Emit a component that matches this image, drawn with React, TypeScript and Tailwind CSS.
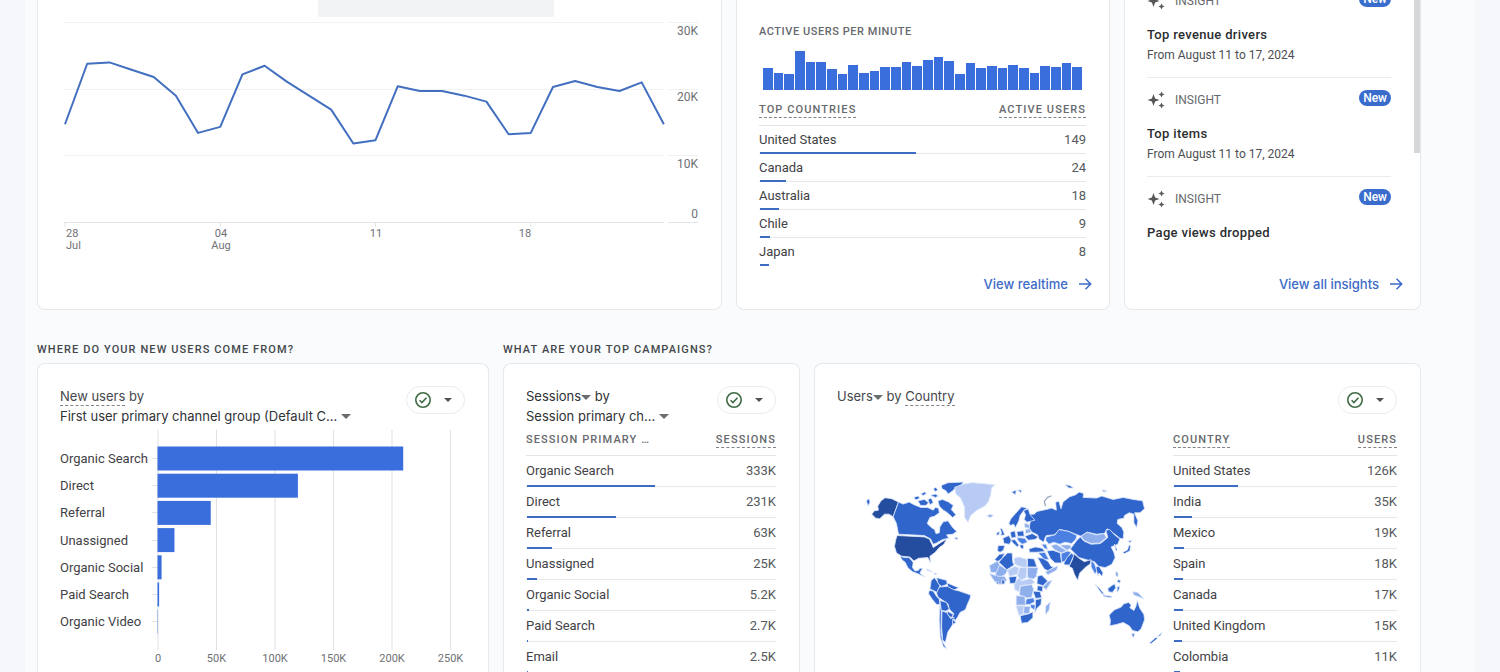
import type { ReactNode } from "react";

/* ─── Data ─── */
const dailyUsers = [
  14.7, 23.8, 24, 22.9, 21.8, 19, 13.4, 14.3, 22.2, 23.5, 21.1, 19, 16.9, 11.8,
  12.3, 20.4, 19.7, 19.7, 19, 18.1, 13.2, 13.4, 20.3, 21.2, 20.3, 19.7, 21, 14.7,
];

const perMinute = [
  22, 17, 16, 39, 28, 28, 21, 16, 25, 17, 19, 23, 23, 28, 24,
  30, 33, 29, 16, 27, 22, 24, 22, 25, 22, 17, 24, 23, 27, 23,
];

type Row = { name: string; value: string; share: number };

const realtimeRows: Row[] = [
  { name: "United States", value: "149", share: 47.8 },
  { name: "Canada", value: "24", share: 7.8 },
  { name: "Australia", value: "18", share: 5.8 },
  { name: "Chile", value: "9", share: 3 },
  { name: "Japan", value: "8", share: 2.6 },
];

const sessionRows: Row[] = [
  { name: "Organic Search", value: "333K", share: 51.2 },
  { name: "Direct", value: "231K", share: 35.5 },
  { name: "Referral", value: "63K", share: 9.8 },
  { name: "Unassigned", value: "25K", share: 3.9 },
  { name: "Organic Social", value: "5.2K", share: 0.8 },
  { name: "Paid Search", value: "2.7K", share: 0.4 },
  { name: "Email", value: "2.5K", share: 0.4 },
];

const countryRows: Row[] = [
  { name: "United States", value: "126K", share: 28.6 },
  { name: "India", value: "35K", share: 8 },
  { name: "Mexico", value: "19K", share: 4.3 },
  { name: "Spain", value: "18K", share: 4.1 },
  { name: "Canada", value: "17K", share: 3.9 },
  { name: "United Kingdom", value: "15K", share: 3.4 },
  { name: "Colombia", value: "11K", share: 2.5 },
];

const channels = [
  { name: "Organic Search", users: 210 },
  { name: "Direct", users: 120 },
  { name: "Referral", users: 45.5 },
  { name: "Unassigned", users: 14.5 },
  { name: "Organic Social", users: 3.5 },
  { name: "Paid Search", users: 1.4 },
  { name: "Organic Video", users: 0.3 },
];

const insights = [
  { title: "Top revenue drivers", range: "From August 11 to 17, 2024" },
  { title: "Top items", range: "From August 11 to 17, 2024" },
  { title: "Page views dropped", range: "" },
];

/* ─── Icons ─── */
const Caret = () => (
  <svg width="10" height="5" viewBox="0 0 10 5" className="inline-block shrink-0 align-middle">
    <path d="M0 0h10L5 5z" fill="#6a6d70" />
  </svg>
);

const Arrow = () => (
  <svg width="14" height="14" viewBox="0 0 14 14" fill="none" stroke="#3c6bc8" strokeWidth="1.5">
    <path d="M1 7h11.5M7.5 1.8 12.7 7l-5.2 5.2" />
  </svg>
);

const Sparkle = () => (
  <svg width="18" height="18" viewBox="0 0 18 18" fill="#555759">
    <path d="M6.5 3 8.1 7.4 12.5 9 8.1 10.6 6.5 15 4.9 10.6.5 9l4.4-1.6z" />
    <path d="m14.5.5.9 2.1 2.1.9-2.1.9-.9 2.1-.9-2.1-2.1-.9 2.1-.9z" />
    <path d="m14.5 11.5.9 2.1 2.1.9-2.1.9-.9 2.1-.9-2.1-2.1-.9 2.1-.9z" />
  </svg>
);

const StatusMenu = () => (
  <button
    type="button"
    aria-label="Data quality"
    className="flex h-7 w-[59px] shrink-0 items-center justify-between rounded-full border border-[#e9ebed] bg-white pr-3 pl-2"
  >
    <svg width="16" height="16" viewBox="0 0 16 16" fill="none" stroke="#3f6b45" strokeWidth="1.6">
      <circle cx="8" cy="8" r="7.2" />
      <path d="m4.6 8.2 2.3 2.3 4.6-4.8" />
    </svg>
    <svg width="8" height="4" viewBox="0 0 8 4">
      <path d="M0 0h8L4 4z" fill="#505356" />
    </svg>
  </button>
);

/* ─── Shared pieces ─── */
const Dashed = ({ children }: { children: ReactNode }) => (
  <span className="border-b border-dashed border-[#808488] pb-px">{children}</span>
);

const Bars = ({
  rows,
  left,
  right,
  compact,
}: {
  rows: Row[];
  left: ReactNode;
  right: ReactNode;
  compact?: boolean;
}) => (
  <table className="w-full border-separate border-spacing-0 text-[13px] leading-4">
    <thead>
      <tr className="h-[31px] text-[11px] tracking-widest text-[#66696d]">
        <th scope="col" className="border-b border-[#e2e4e7] text-left font-medium">{left}</th>
        <th scope="col" className="border-b border-[#e2e4e7] text-right font-medium">{right}</th>
      </tr>
    </thead>
    <tbody>
      {rows.map((row, i) => {
        const line = i === rows.length - 1 ? "border-transparent" : "border-[#e6e8eb]";
        return (
          <tr key={row.name} className={compact ? "relative h-7" : "relative h-[31px]"}>
            <td className={`border-b ${line} text-[#3f4246]`}>
              {row.name}
              <span
                className="absolute bottom-0 left-px h-0.5 bg-[#3c6cc4]"
                style={{ width: `${row.share}%` }}
              />
            </td>
            <td className={`border-b ${line} text-right text-[#55585c]`}>{row.value}</td>
          </tr>
        );
      })}
    </tbody>
  </table>
);

const FooterLink = ({ children }: { children: ReactNode }) => (
  <a href="#" className="flex items-center justify-end gap-2.5 font-[family-name:Inter,sans-serif] text-[13px] leading-5 font-medium text-[#3c6bc8]">
    {children}
    <Arrow />
  </a>
);

const cardTop = "rounded-b-lg border-x border-b border-[#e6e9ec] bg-white";
const cardBottom = "rounded-t-lg border-x border-t border-[#e6e9ec] bg-white pt-[22px] pr-[23px] pl-[22px]";
const cardHead = "flex h-[39px] justify-between font-[family-name:Inter,sans-serif] text-[13px] leading-5 text-[#44474b]";

/* ─── Charts ─── */
const LineChart = () => {
  const x = (i: number) => 1 + i * 22.18;
  const y = (v: number) => 222 - v * 6.65;
  const points = dailyUsers.map((v, i) => `${x(i)},${y(v)}`).join(" ");
  return (
    <svg viewBox="0 17 636 240" className="block w-full text-[11px]" fill="#6e7175">
      {[0, 10, 20, 30].map((v) => (
        <g key={v}>
          <path
            d={`M0 ${Math.floor(y(v)) + 0.5}H600M604 ${Math.floor(y(v)) + 0.5}H634`}
            stroke={v === 0 ? "#e2e4e4" : "#f0f1f2"}
          />
          <text x="634" y={v === 0 ? 218 : y(v) + 12} textAnchor="end" className="text-[12px]">
            {v === 0 ? "0" : `${v}K`}
          </text>
        </g>
      ))}
      {[0, 7, 14, 21].map((i) => (
        <path key={i} d={`M${x(i)} 222v5`} stroke="#e2e4e4" />
      ))}
      <text x="2" y="237">28</text>
      <text x="2" y="249">Jul</text>
      <text x="157" y="237" textAnchor="middle">04</text>
      <text x="157" y="249" textAnchor="middle">Aug</text>
      <text x="312" y="237" textAnchor="middle">11</text>
      <text x="461" y="237" textAnchor="middle">18</text>
      <polyline points={points} fill="none" stroke="#426fbf" strokeWidth="2" strokeLinejoin="round" />
    </svg>
  );
};

const ChannelChart = () => (
  <svg viewBox="0 0 405 240" className="mt-[5px] block w-full text-[13px]" fill="#3f4246">
    {[0, 50, 100, 150, 200, 250].map((v) => (
      <g key={v}>
        <path d={`M${98 + v * 1.17} 0V220`} stroke="#dfe1e3" />
        <text x={98 + v * 1.17} y="232" textAnchor="middle" className="fill-[#6e7175] text-[11px]">
          {v === 0 ? "0" : `${v}K`}
        </text>
      </g>
    ))}
    {channels.map((c, i) => (
      <g key={c.name}>
        <path d={`M92 ${28.5 + Math.round(i * 27.2)}h6`} stroke="#e2e4e6" />
        <text x="0" y={33 + i * 27.2}>{c.name}</text>
        <rect x="97.5" y={16.5 + i * 27.2} width={c.users * 1.17} height="24" fill="#3a6edc" />
      </g>
    ))}
  </svg>
);

const tone = { dark: "#244c9f", main: "#3065cb", mid: "#4b7fe2", soft: "#8eaeec", pale: "#b7cbf4" };

// [tone, outline]
const americas: [keyof typeof tone, string][] = [
  ["dark", "M38 132 46 122 58 120 56 108 66 92 78 83 98 86 118 96 102 140 90 132 76 132 62 146 50 144Z"],
  ["main", "M22 92l8-6 3 10-6 12z"],
  ["main", "M118 96 132 102 150 96 165 104 185 112 205 112 222 120 228 112 238 114 240 128 226 138 212 142 204 160 216 172 226 178 230 190 240 188 242 170 252 155 266 152 280 172 292 184 280 192 262 194 268 204 250 208 232 218 222 222 214 206 195 196 118 192 112 160 102 140Z"],
  ["main", "M246 46 266 38 312 36 304 48 290 52 278 64 266 72 260 62 248 56Z"],
  ["main", "M236 92 250 88 268 96 282 106 276 118 290 134 280 142 262 126 252 120 240 108Z"],
  ["main", "M176 92 196 88 208 98 200 106 184 106ZM164 82l12-4 6 6-12 6zM206 88l10-4 6 14-10 6zM184 72l12-6 6 4-10 6zM214 76l14-4 10 6-10 4zM222 56l8-4 6 8-8 4z"],
  ["dark", "M114 196 195 200 210 206 218 222 222 232 246 216 262 206 254 222 240 232 228 246 212 258 214 278 206 262 178 264 164 272 152 260 128 258 112 248 106 228 110 208Z"],
  ["main", "M122 258 136 262 150 262 162 276 160 292 168 302 178 300 182 294 190 294 182 308 196 320 180 312 160 304 146 292 138 276 130 270Z"],
  ["main", "M202 296l18 8-16-4zM224 308l10 4-8 1z"],
  ["pale", "M286 52 312 42 340 38 406 44 396 54 394 74 386 96 376 108 350 122 334 136 326 156 316 142 316 112 304 84 290 72Z"],
  ["soft", "M382 138l8-5 12 2-8 7z"],
  ["main", "M286 202l8 0 2 6-8-2z"],
  ["main", "M216 330 226 322 236 336 242 346 234 366 222 360 212 356Z"],
  ["main", "M232 322 262 330 264 342 246 348 236 338Z"],
  ["main", "M264 338 298 352 282 360 266 352Z"],
  ["main", "M210 360 222 362 232 378 240 386 242 402 232 402 220 388 208 370Z"],
  ["main", "M240 350 264 348 284 358 300 362 334 374 332 384 324 402 318 418 302 426 296 438 288 450 278 440 284 430 270 416 266 400 248 388 236 380 232 368Z"],
  ["main", "M242 390 262 396 270 416 260 422 246 420Z"],
  ["main", "M264 422 282 432 276 442 264 432Z"],
  ["main", "M242 404 246 422 245 480 250 514 262 534 252 528 243 500 240 450Z"],
  ["main", "M248 422 262 426 274 444 284 440 280 462 274 472 266 484 262 500 258 516 250 508 247 470Z"],
  ["main", "M280 446 290 456 280 462Z"],
];

const eurasia: [keyof typeof tone, string][] = [
  ["main", "M150 132 164 132 172 124 200 118 216 114 230 120 228 96 238 94 244 116 250 96 270 80 288 74 298 66 312 70 310 82 350 84 366 78 400 88 430 82 460 88 488 92 494 116 480 128 464 128 474 152 470 172 462 158 462 132 448 128 434 136 432 144 414 148 412 160 426 172 432 186 430 206 420 204 400 188 382 176 374 190 350 192 322 186 304 198 288 192 268 184 240 178 224 194 200 196 196 204 192 216 178 206 174 194 158 186 148 174 152 156Z"],
  ["mid", "M200 200 226 194 238 178 268 184 292 196 288 208 276 220 256 216 240 222 222 216 208 222 198 210Z"],
  ["soft", "M304 198 322 186 350 194 372 190 380 202 360 218 334 220 312 210Z"],
  ["main", "M290 212 302 200 312 212 334 222 362 220 384 202 378 180 390 178 404 194 420 206 414 222 394 230 402 246 406 262 396 282 376 292 356 288 344 274 326 270 298 262 282 246 272 236Z"],
  ["dark", "M282 250 298 264 314 274 334 268 332 280 316 292 300 308 294 330 284 312 278 294 268 288 278 268Z"],
  ["main", "M202 242 220 240 242 248 246 278 226 278 212 264Z"],
  ["mid", "M244 250 264 242 274 246 258 272 246 276Z"],
  ["main", "M252 280 262 262 276 248 282 256 270 284 258 284Z"],
  ["soft", "M214 226 230 222 262 242 244 248 224 238ZM240 224l30 0 6 8-14 8z"],
  ["main", "M148 236 168 230 188 234 196 244 170 246 150 246Z"],
  ["mid", "M176 248 196 246 208 268 194 268Z"],
  ["main", "M174 262 190 264 206 274 214 288 222 290 206 302 194 296 184 280Z"],
  ["soft", "M198 304 222 292 236 286 230 300 204 314Z"],
  ["mid", "M186 222l14 0 4 16-10-4z"],
  ["main", "M88 160 94 146 108 130 126 110 142 114 132 122 122 136 118 152 108 172 102 162 94 166Z"],
  ["main", "M132 122 146 116 152 134 166 150 142 156 134 148 138 134Z"],
  ["main", "M62 174l6 2 8 18-12 2 2-8zM52 188l8-4-1 10-7 1z"],
  ["main", "M70 204 88 196 96 210 90 222 74 220Z"],
  ["main", "M56 226 76 226 72 240 62 246 54 242Z"],
  ["main", "M92 186 106 182 110 200 96 204Z"],
  ["main", "M112 184 132 182 134 198 114 198Z"],
  ["main", "M94 210 106 208 118 224 114 230 102 220Z"],
  ["main", "M136 198 158 190 176 200 166 208 146 210Z"],
  ["mid", "M112 202 136 204 144 216 128 222 116 212Z"],
  ["main", "M120 224l12 0 0 12-8-2z"],
  ["soft", "M134 160l14 2 2 12-14-2zM138 178l12-2 6 10-18 4z"],
  ["main", "M66 266 84 248 98 248 100 276 104 284 82 298 58 276Z"],
  ["main", "M46 268 60 252 76 250 66 266 54 274Z"],
  ["soft", "M30 286 54 272 60 282 60 308 34 306Z"],
  ["soft", "M60 284 84 300 78 312 60 322 46 318Z"],
  ["pale", "M84 300 106 288 118 292 114 312 90 318Z"],
  ["pale", "M104 264 118 260 142 268 142 292 120 288 106 282Z"],
  ["main", "M144 264 164 266 172 290 144 290Z"],
  ["soft", "M144 292 176 292 170 318 162 326 144 322Z"],
  ["pale", "M120 292 142 292 140 322 124 330 114 316Z"],
  ["main", "M88 320 112 318 108 338 92 340Z"],
  ["soft", "M30 310 58 318 74 318 82 328 74 340 60 342 46 334Z"],
  ["main", "M66 330l8-2 2 12-8 2zM50 334l6 0 2 8-6-2z"],
  ["main", "M174 318 186 314 204 332 190 346 172 340Z"],
  ["soft", "M204 334 218 330 200 358 190 350Z"],
  ["main", "M174 346 190 348 188 364 172 360Z"],
  ["main", "M160 362 182 364 186 382 168 384Z"],
  ["soft", "M122 348 156 342 162 356 156 382 140 382 120 374Z"],
  ["pale", "M104 342 118 322 126 332 154 324 166 336 156 342 122 346 118 364 106 358Z"],
  ["soft", "M110 376 136 378 138 404 110 404Z"],
  ["mid", "M140 386 162 382 166 394 150 402 138 402Z"],
  ["main", "M168 388 186 384 184 402 172 414 166 428Z"],
  ["pale", "M110 406 134 406 130 432 118 434Z"],
  ["soft", "M134 408 152 408 150 428 132 430Z"],
  ["mid", "M152 402 168 404 164 418 154 412Z"],
  ["main", "M122 436 148 430 160 424 160 442 144 456 126 458Z"],
  ["soft", "M198 408 212 394 208 420 198 432Z"],
  ["mid", "M334 270 344 280 352 300 346 312 334 290Z"],
  ["main", "M348 290 358 288 370 308 366 318 358 308 354 316Z"],
  ["main", "M346 342 358 352 374 372 366 370ZM370 374l26 4-2 4-22-4z"],
  ["main", "M384 354 404 340 408 352 398 366 386 364Z"],
  ["main", "M412 350l8-2-4 14-4 2zM408 304l6 4 0 12-5-4zM414 328l8 2-2 8-8-4z"],
  ["soft", "M458 364 474 366 492 386 478 380 462 374Z"],
  ["main", "M428 246 442 240 448 224 452 226 450 242 434 250ZM446 212l10-2-6 8zM404 222l8 16-4 4z"],
  ["main", "M388 434 404 418 424 410 432 400 446 396 454 404 450 412 462 420 468 408 472 390 480 414 492 432 494 448 484 474 474 484 458 480 448 466 430 456 410 462 390 466 392 450Z"],
  ["main", "M455 490 465 490 460 502ZM508 518 528 500 532 504 514 519ZM532 498 546 486 541 496Z"],
  ["main", "M96 66 110 60 108 74ZM114 60l12 0-2 8zM256 44l14 2 12 8-14 0zM366 60l16 2-10 4z"],
];

const WorldMap = () => (
  <svg
    viewBox="0 0 915 570"
    className="block w-full"
    stroke="#dce7fb"
    strokeWidth="2.5"
    strokeLinejoin="round"
    role="img"
    aria-label="Users by country map"
  >
    {americas.map(([t, d]) => (
      <path key={d} d={d} fill={tone[t]} />
    ))}
    <g transform="translate(360 0)">
      {eurasia.map(([t, d]) => (
        <path key={d} d={d} fill={tone[t]} />
      ))}
      <path d="M198 108 194 94 204 82 216 77" fill="none" stroke="#9aa9c4" strokeWidth="4" />
    </g>
  </svg>
);

/* ─── Page ─── */
const App = () => (
  <div className="h-screen overflow-hidden bg-[#f5f7fb] px-[25px] font-['Roboto',sans-serif]">
    <main className="flex h-full flex-col bg-[#f9fbfd] pr-[54px] pl-3">
      <div className="grid grid-cols-[685fr_374fr_297fr] gap-x-3.5">
        <section className={`${cardTop} pr-[21px] pl-[26px]`}>
          <div className="ml-[254px] h-[17px] w-[236px] bg-[#f1f3f4]" />
          <LineChart />
        </section>

        <section className={`${cardTop} pb-[15px]`}>
          <div className="pr-[23px] pl-[22px]">
            <h3 className="pt-6 text-[11px] leading-4 font-medium tracking-wider text-[#66696d]">ACTIVE USERS PER MINUTE</h3>
            <div className="mx-1 mt-[11px] mb-[5px] flex h-[39px] items-end gap-px">
              {perMinute.map((v, i) => (
                <div key={i} className="flex-1 bg-[#3a6edc]" style={{ height: v }} />
              ))}
            </div>
            <Bars
              rows={realtimeRows}
              left={<Dashed>TOP COUNTRIES</Dashed>}
              right={<Dashed>ACTIVE USERS</Dashed>}
              compact
            />
          </div>
          <div className="pt-2 pr-[17px]">
            <FooterLink>View realtime</FooterLink>
          </div>
        </section>

        <section className={`${cardTop} relative flex flex-col overflow-hidden pb-[15px]`}>
          <ul className="-mt-[22px] flex-1 pr-[29px] pl-[22px]">
            {insights.map((item) => (
              <li key={item.title} className="border-t border-[#e9ebed] pt-3 pb-3">
                <div className="flex h-5 items-center text-[12px] text-[#66696d]">
                  <Sparkle />
                  <span className="ml-2.5 flex-1">INSIGHT</span>
                  <span className="self-start rounded-full bg-[#3a6ccc] px-1 text-[12px] leading-4 font-medium text-white">New</span>
                </div>
                <h4 className="mt-3.5 text-[13px] leading-5 font-medium tracking-wide text-[#2b2d30]">{item.title}</h4>
                {item.range && <p className="text-[12px] leading-5 text-[#4c4f53]">{item.range}</p>}
              </li>
            ))}
          </ul>
          <div className="pr-[17px]">
            <FooterLink>View all insights</FooterLink>
          </div>
          <div className="absolute top-0 right-0 h-[153px] w-1.5 bg-[#d6d7d9]" />
        </section>
      </div>

      <div className="mt-8 grid flex-1 grid-cols-[452fr_297fr_607fr] grid-rows-[auto_1fr] gap-x-3.5 gap-y-[5px]">
        <h2 className="text-[11px] leading-4 font-medium tracking-widest text-[#44474b]">WHERE DO YOUR NEW USERS COME FROM?</h2>
        <h2 className="col-span-2 text-[11px] leading-4 font-medium tracking-widest text-[#44474b]">WHAT ARE YOUR TOP CAMPAIGNS?</h2>

        <section className={cardBottom}>
          <div className={cardHead}>
            <div>
              <p><Dashed>New users</Dashed> by</p>
              <button type="button" className="flex items-center gap-1 text-[#2f3235]">
                First user primary channel group (Default C... <Caret />
              </button>
            </div>
            <StatusMenu />
          </div>
          <ChannelChart />
        </section>

        <section className={cardBottom}>
          <div className={cardHead}>
            <div className="text-[#2f3235]">
              <p><button type="button">Sessions<Caret /></button> by</p>
              <button type="button" className="flex items-center gap-1">
                Session primary ch... <Caret />
              </button>
            </div>
            <StatusMenu />
          </div>
          <Bars rows={sessionRows} left="SESSION PRIMARY …" right={<Dashed>SESSIONS</Dashed>} />
        </section>

        <section className={cardBottom}>
          <div className={cardHead}>
            <p><button type="button">Users<Caret /></button> by <Dashed>Country</Dashed></p>
            <StatusMenu />
          </div>
          <div className="flex">
            <div className="flex-1 pt-[45px] pr-2 pl-[22px]">
              <WorldMap />
            </div>
            <div className="w-56">
              <Bars rows={countryRows} left={<Dashed>COUNTRY</Dashed>} right={<Dashed>USERS</Dashed>} />
            </div>
          </div>
        </section>
      </div>
    </main>
  </div>
);

export default App;
